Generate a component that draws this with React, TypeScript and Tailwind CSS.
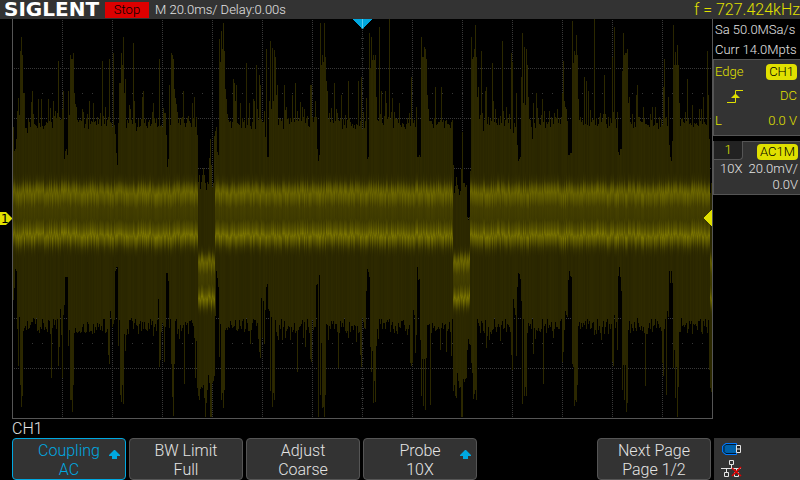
import { ReactNode } from "react";

type Extent = Record<number, number>;

const LEFT = 13;
const RIGHT = 712;

const parse = (text: string): Extent =>
  Object.fromEntries(text.trim().split(/\s+/).map((pair) => pair.split(":").map(Number)));

// Highest sample per column, where it leaves the noise floor.
const PEAKS = parse(`
  13:127 14:151 15:149 16:139 17:111 18:98 19:115 20:51 21:37 22:55 23:93 24:93 27:133 31:102 32:91 38:99 41:99 48:99
  50:108 53:101 58:61 63:91 64:159 65:151 66:149 67:155 68:91 69:115 70:55 71:59 72:59 73:53 74:93 75:104 76:107
  89:101 93:103 102:61 105:107 109:59 113:53 114:125 115:134 116:153 117:165 118:123 119:83 120:83 121:53 122:65 123:37
  124:93 125:79 129:105 130:109 133:43 134:101 135:123 136:131 142:97 143:91 153:103 159:59 164:113 165:113
  166:135 167:167 168:159 169:85 170:125 171:53 172:55 173:59 174:89 175:98 176:104 183:91 192:103 194:97
  197:135 198:182 199:175 200:189 201:182 202:175 203:168 204:175 205:183 206:190 207:182 208:184 209:158 210:139 211:165
  212:187 213:183 214:136 215:131 216:127 217:152 218:155 219:39 220:62 221:31 222:49 223:23 224:51 225:89 226:99
  233:79 234:83 235:101 236:85 240:103 246:63 249:103 253:99 254:101 256:65 259:75 260:85 265:137 266:49 267:157 268:157
  269:101 270:41 271:109 272:48 273:101 274:50 275:57 276:95 277:85 284:85 286:107 292:95 295:83 300:102 302:107 310:85
  311:85 315:101 317:149 318:161 319:155 320:23 321:65 322:55 323:62 324:23 325:57 326:81 327:91 334:83 336:109 341:95
  348:81 358:81 361:77 366:98 367:159 368:157 369:33 370:68 371:37 372:60 373:55 374:60 375:55 376:97 379:27 381:91
  385:91 386:103 389:19 392:98 399:103 411:77 416:107 417:157 418:157 419:155 420:157 421:37 422:57 423:57 424:47
  425:49 426:59 427:95 428:109 435:87 441:87 453:165 454:193 455:186 456:177 457:185 458:189 459:195 460:191 461:169
  462:132 463:183 464:183 465:187 466:185 467:217 468:220 469:217 470:171 471:37 472:59 473:57 474:49 475:25 476:57
  477:97 478:87 481:51 482:113 483:131 485:91 486:87 492:63 493:101 502:41 503:111 506:107 511:53 512:62 513:133
  516:93 517:145 518:161 519:159 520:157 521:77 522:33 523:103 524:47 525:105 526:49 527:65 528:97 532:139 533:103
  536:93 542:99 549:111 557:109 562:93 563:61 564:101 565:107 568:155 569:155 570:153 571:153 572:21 573:63 574:51
  575:55 576:35 577:55 578:99 584:77 586:81 588:91 594:19 604:75 612:57 614:27 618:152 619:155 620:149 621:149
  622:71 623:33 624:55 625:53 626:53 627:49 628:103 629:97 636:95 637:85 643:107 652:107 655:107 663:87 664:59 668:97
  669:145 670:157 671:161 672:141 673:25 674:65 675:52 676:65 677:45 678:65 679:103 687:79 692:105 703:97 707:51 708:95
  709:139 710:193 711:183
`);

// Lowest sample per column, where it leaves the noise floor.
const TROUGHS = parse(`
  13:300 14:288 15:269 16:271 17:329 18:366 19:317 20:385 21:407 22:396 51:378 58:366 59:347 60:309 61:335 62:378
  63:315 64:305 65:277 66:277 67:277 68:346 69:330 70:400 71:400 72:412 73:385 108:355 109:364 110:311 115:271 116:267
  117:267 118:346 120:395 121:402 122:385 123:404 125:351 158:299 159:367 160:360 164:362 166:273 167:273 168:281
  171:364 172:397 173:416 174:364 184:384 195:378 196:341 197:388 198:396 199:400 200:389 201:387 202:388 203:385
  204:398 205:417 206:403 207:390 208:375 209:383 210:417 211:417 212:383 213:381 214:376 215:316 216:271 217:278
  218:287 219:357 221:400 222:393 223:408 224:390 250:344 259:352 260:358 261:298 262:338 263:301 264:344 265:310
  266:287 267:284 268:309 269:311 270:391 271:317 272:407 273:393 274:400 285:338 290:340 297:372 305:347 310:359
  311:362 316:285 317:284 318:417 319:275 320:395 321:343 322:408 323:407 324:417 325:395 338:368 360:355 361:367
  362:318 366:291 367:269 368:272 369:277 370:347 371:372 372:351 373:403 374:381 375:402 376:346 410:363 411:366
  412:363 413:310 414:315 415:353 416:335 417:267 418:280 419:279 420:340 421:396 422:359 423:406 424:359 425:410
  426:358 430:405 440:350 446:352 451:356 453:391 454:385 455:396 456:398 457:373 458:381 459:388 460:387 461:417
  462:417 463:379 464:382 465:379 466:378 467:350 468:339 469:344 470:345 471:363 472:373 473:399 474:394 475:390
  476:400 486:348 511:355 512:370 513:299 514:308 515:315 516:356 517:287 518:273 519:274 520:279 521:301 522:404
  523:319 524:396 525:387 526:396 533:354 543:384 562:362 563:352 565:311 566:315 567:317 568:280 569:271 570:276
  571:277 572:364 573:367 574:406 575:400 576:402 577:385 612:362 613:366 614:315 617:350 618:276 619:267 620:277
  621:291 622:390 623:365 624:400 625:365 626:412 627:403 645:386 662:363 663:376 666:395 667:311 668:317 669:271
  670:283 671:271 672:283 673:368 674:350 675:398 676:367 677:417 678:387 709:370 710:388 711:392
`);

function seeded(seed: number) {
  let state = seed;
  return () => {
    state = (state * 1664525 + 1013904223) % 4294967296;
    return state / 4294967296;
  };
}

const random = seeded(91);

const columns = Array.from({ length: RIGHT - LEFT }, (_, i) => {
  const x = LEFT + i;
  const low = (x >= 198 && x <= 214) || (x >= 453 && x <= 469) || x >= 710;
  const top = PEAKS[x] ?? 117 + Math.round(random() * 12) - (random() > 0.8 ? 9 : 0);
  const bottom = TROUGHS[x] ?? 318 + Math.round(random() * 16) + (random() > 0.85 ? 8 : 0);
  return {
    x,
    low,
    top,
    bottom,
    shift: Math.round((random() - 0.5) * 6),
    glow: 0.78 + random() * 0.22,
    shade: random() * 0.1,
  };
});

const range = (from: number, to: number, step: number) =>
  Array.from({ length: Math.floor((to - from) / step) + 1 }, (_, i) => from + i * step);

function Waveform() {
  return (
    <svg
      viewBox="13 19 699 399"
      preserveAspectRatio="none"
      className="block h-full w-full"
      role="img"
      aria-label="Channel 1 waveform"
      shapeRendering="crispEdges"
    >
      <defs>
        <linearGradient id="band" x1="0" y1="0" x2="0" y2="1">
          <stop offset="0" stopColor="#302c00" stopOpacity="0" />
          <stop offset="0.1" stopColor="#383400" />
          <stop offset="0.17" stopColor="#5a5500" />
          <stop offset="0.23" stopColor="#706a00" />
          <stop offset="0.31" stopColor="#5e5900" />
          <stop offset="0.4" stopColor="#464100" />
          <stop offset="0.57" stopColor="#403c00" />
          <stop offset="0.67" stopColor="#5a5500" />
          <stop offset="0.75" stopColor="#7c7600" />
          <stop offset="0.82" stopColor="#5e5900" />
          <stop offset="0.9" stopColor="#3a3600" />
          <stop offset="1" stopColor="#302c00" stopOpacity="0" />
        </linearGradient>
      </defs>
      <g stroke="#383838" strokeWidth="1">
        {range(62, 662, 50).map((x) => (
          <line key={x} x1={x + 0.5} x2={x + 0.5} y1="20" y2="418" strokeDasharray="1 1" />
        ))}
        {range(68, 368, 50).map((y) => (
          <line key={y} x1="14" x2="712" y1={y + 0.5} y2={y + 0.5} strokeDasharray="1 1" />
        ))}
        {[93, 343].map((y) => (
          <line key={y} x1="22" x2="712" y1={y + 0.5} y2={y + 0.5} strokeDasharray="1 9" />
        ))}
        {range(28, 408, 10).map((y) => (
          <line key={y} x1="361" x2="364" y1={y + 0.5} y2={y + 0.5} />
        ))}
      </g>
      {columns.map(({ x, low, top, bottom, shift, glow, shade }) => (
        <g key={x}>
          <rect x={x} y={top} width="1" height={bottom - top} fill="#2e2a00" />
          <rect x={x} y={top} width="1" height={bottom - top} fill="#000000" opacity={shade} />
          <rect
            x={x}
            y={(low ? 246 : 174) + shift}
            width="1"
            height={low ? 70 : 82}
            fill="url(#band)"
            opacity={glow}
          />
        </g>
      ))}
      <path d="M353 19h19l-9 10h-1z" fill="#00a8e0" />
      <path d="M362 19h1v9h-1z" fill="#55ccf2" />
      <path d="M703 218l9-9v18z" fill="#e0e000" />
    </svg>
  );
}

function UpArrow() {
  return (
    <svg viewBox="0 0 11 9" className="absolute right-[5px] top-[11px] h-[9px] w-[11px]" aria-hidden="true">
      <path d="M5 0h1l5 5v1H8v3H3V6H0V5z" fill="#00a8e0" />
    </svg>
  );
}

function SoftKey({ title, value, active, arrow }: { title: string; value: string; active?: boolean; arrow?: boolean }) {
  return (
    <button
      type="button"
      className={
        active
          ? "relative rounded border border-[#00a8e0] bg-[#333] pt-px text-[16px] leading-[19px] text-[#00a8e0]"
          : "relative rounded border border-[#555] bg-[#333] pt-px text-[16px] leading-[19px] text-[#e4e4e4]"
      }
    >
      <span className="block">{title}</span>
      <span className="block">{value}</span>
      {arrow && <UpArrow />}
    </button>
  );
}

function Badge({ children }: { children: ReactNode }) {
  return <span className="rounded bg-[#e0e000] px-[3px] leading-4 text-black">{children}</span>;
}

function TriggerPanel() {
  return (
    <section className="h-[77px] border-y border-l border-[#555] bg-[#333] pl-px pr-[3px] text-[13px] text-[#e0e000]">
      <div className="flex h-6 items-center justify-between">
        <span>Edge</span>
        <Badge>CH1</Badge>
      </div>
      <div className="flex h-6 items-center justify-between pl-3">
        <svg viewBox="0 0 16 13" className="h-[13px] w-4" aria-hidden="true">
          <path d="M0 12.5h8.500V.5H16" fill="none" stroke="#e0e000" />
          <path d="M8 4h1l4 4H4z" fill="#e0e000" />
        </svg>
        <span>DC</span>
      </div>
      <div className="flex h-[26px] items-center justify-between">
        <span>L</span>
        <span>0.0 V</span>
      </div>
    </section>
  );
}

function ChannelPanel() {
  return (
    <section className="mt-[5px] border-b border-l border-[#555] bg-[#333] pb-px text-[13px] leading-4 text-[#e4e4e4]">
      <div className="flex justify-between">
        <span className="w-[29px] rounded-br border-b border-r border-[#555] bg-[#222] text-center leading-[18px] text-[#e0e000]">
          1
        </span>
        <div className="flex flex-1 items-end justify-end border-t border-[#555] pr-[2px]">
          <Badge>AC1M</Badge>
        </div>
      </div>
      <div className="flex justify-between pl-[6px] pr-[2px] pt-px">
        <span>10X</span>
        <span>20.0mV/</span>
      </div>
      <div className="pr-[2px] text-right">0.0V</div>
    </section>
  );
}

export default function App() {
  return (
    <div className="flex h-screen min-h-[300px] flex-col overflow-hidden bg-black font-[Roboto,'Liberation_Sans',sans-serif] font-light">
      <header className="flex h-[19px] shrink-0 items-center bg-[#333] pl-1 text-[13px] text-[#e4e4e4]">
        <h1 className="w-[101px] font-['DejaVu_Sans',sans-serif] text-[20px] font-bold leading-[19px] text-white">SIGLENT</h1>
        <span className="w-11 bg-[#dd0000] text-center leading-4 text-black">Stop</span>
        <span className="ml-[6px]">M 20.0ms/ Delay:0.00s</span>
        <span className="ml-auto text-[16px] text-[#e0e000]">f = 727.424kHz</span>
      </header>

      <main className="flex min-h-0 flex-1">
        <div className="flex w-3 shrink-0 flex-col justify-center pb-[2px]">
          <svg viewBox="0 0 12 13" className="h-[13px] w-3" role="img" aria-label="Channel 1 level">
            <path d="M0 0h6l6 6v1l-6 6H0z" fill="#e0e000" />
            <text x="1" y="11" fontSize="12" fontFamily="DejaVu Sans" fontWeight="400" fill="#000">
              1
            </text>
          </svg>
        </div>
        <div className="min-w-0 flex-1 border-x border-b border-[#555]">
          <Waveform />
        </div>
        <aside className="w-[87px] shrink-0">
          <div className="h-10 pl-[2px] pt-px text-[13px] leading-5 text-[#e4e4e4]">
            <p className="whitespace-nowrap">Sa 50.0MSa/s</p>
            <p className="whitespace-nowrap">Curr 14.0Mpts</p>
          </div>
          <TriggerPanel />
          <ChannelPanel />
        </aside>
      </main>

      <h2 className="shrink-0 pl-3 text-[16px] font-light leading-[19px] text-[#e4e4e4]">CH1</h2>

      <footer className="flex h-[42px] shrink-0">
        <nav className="grid flex-1 grid-cols-6 gap-[3px] pl-3 pr-[3px]">
          <SoftKey title="Coupling" value="AC" active arrow />
          <SoftKey title="BW Limit" value="Full" />
          <SoftKey title="Adjust" value="Coarse" />
          <SoftKey title="Probe" value="10X" arrow />
          <span />
          <SoftKey title="Next Page" value="Page 1/2" />
        </nav>
        <div className="flex w-[86px] flex-col gap-[5px] bg-[#333] pl-[7px] pt-[5px]">
          <svg viewBox="0 0 20 12" className="ml-px h-3 w-5" role="img" aria-label="USB connected">
            <path d="M14.500.5H3.500L.5 3v6l3 2.500h11z" fill="#0060a8" stroke="#0078ff" />
            <path d="M14 1.500H4L2 3.500v5l2 2h10" fill="none" stroke="#001830" />
            <path d="M14.500 2.500h4v7h-4z" fill="#222" stroke="#e4e4e4" />
            <path d="M15 6h4" stroke="#e4e4e4" />
          </svg>
          <svg viewBox="0 0 21 17" className="h-[17px] w-[21px]" role="img" aria-label="Network disconnected">
            <g fill="none" stroke="#e4e4e4">
              <path d="M8.500.5h4v4h-4zM10.500 4.500v4M0 8.500h20M5.500 8.500v4M15.500 8.500v4M3.500 12.500h4v4h-4zM13.500 12.500h4v4h-4z" />
            </g>
            <path d="M11 8l9 8M20 7l-9 9" stroke="#e00000" strokeWidth="1.6" />
          </svg>
        </div>
      </footer>
    </div>
  );
}
